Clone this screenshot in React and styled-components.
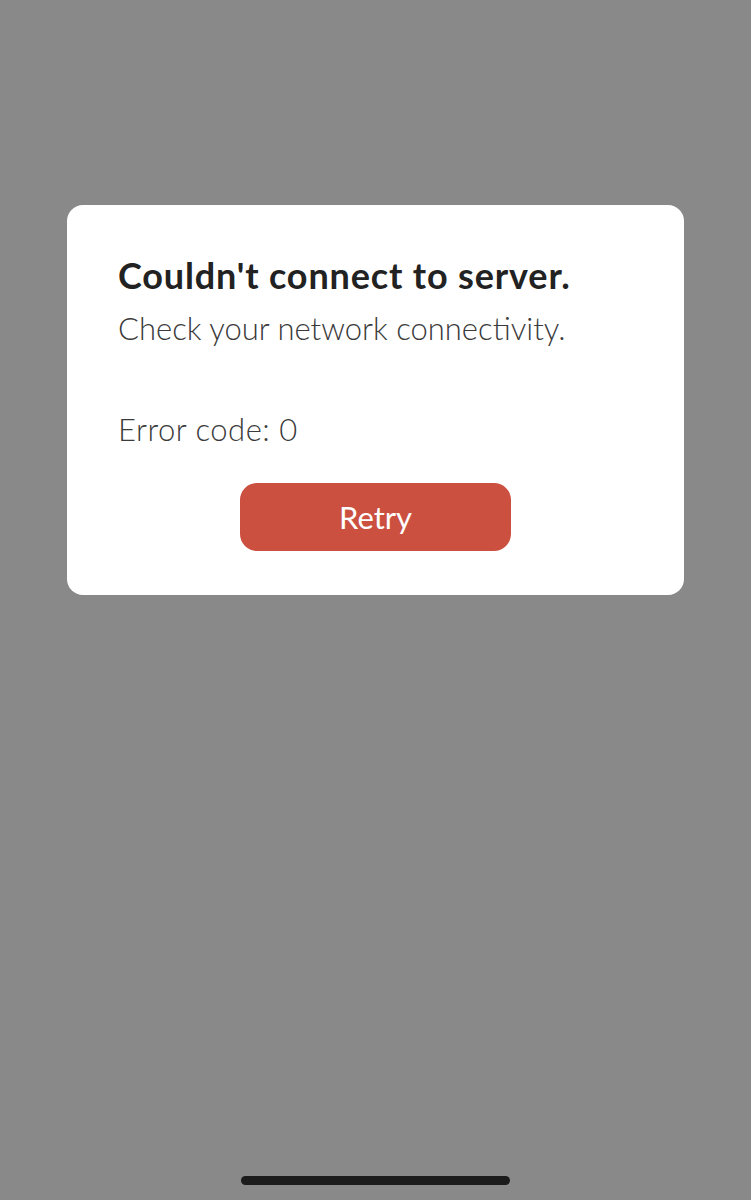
import React from 'react';
import styled, { createGlobalStyle } from 'styled-components';

const GlobalStyle = createGlobalStyle`
  html, body {
    margin: 0;
    padding: 0;
    background: #898989;
  }
  body {
    font-family: Lato, "Noto Sans", sans-serif;
  }
`;

const Screen = styled.div`
  width: 751px;
  height: 1200px;
  display: flex;
  flex-direction: column;
  align-items: center;
  background: #898989;
`;

const Card = styled.div`
  margin-top: 205px;
  width: 617px;
  height: 390px;
  box-sizing: border-box;
  padding: 48px 51px 0;
  background: #fff;
  border-radius: 16px;
  display: flex;
  flex-direction: column;
`;

const Title = styled.h1`
  margin: 0;
  font-size: 36px;
  line-height: 44px;
  font-weight: 700;
  letter-spacing: 0.85px;
  color: #222;
`;

const Body = styled.p`
  margin: 0;
  margin-top: ${p => p.gap || 12}px;
  font-size: 31px;
  line-height: 38px;
  font-weight: 300;
  letter-spacing: ${p => p.spacing || 0}px;
  color: #3a3a3a;
`;

const RetryButton = styled.button`
  align-self: center;
  margin-top: 35px;
  width: 271px;
  height: 68px;
  border: none;
  border-radius: 17px;
  background: #cb5040;
  color: #fff;
  font-family: inherit;
  font-size: 31px;
  font-weight: 400;
  cursor: pointer;
`;

const Spacer = styled.div`
  flex: 1;
`;

const HomeIndicator = styled.div`
  width: 269px;
  height: 9px;
  margin-bottom: 15px;
  border-radius: 5px;
  background: #1c1c1c;
`;

export default function App() {
  return (
    <Screen>
      <GlobalStyle />
      <Card>
        <Title>Couldn't connect to server.</Title>
        <Body>Check your network connectivity.</Body>
        <Body gap={63} spacing={0.5}>Error code: 0</Body>
        <RetryButton>Retry</RetryButton>
      </Card>
      <Spacer />
      <HomeIndicator />
    </Screen>
  );
}
